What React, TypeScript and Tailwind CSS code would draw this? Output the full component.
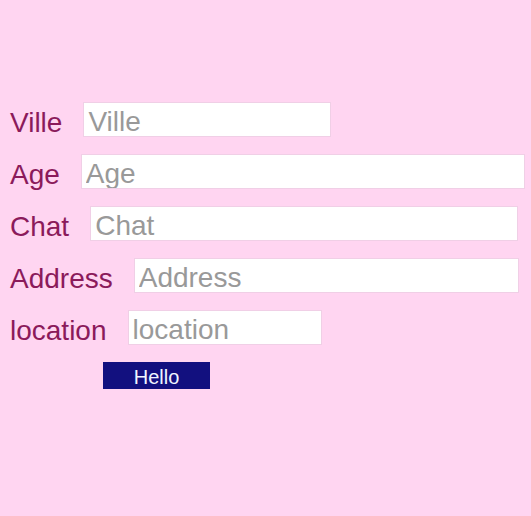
import React from "react";

const fields = [
  { name: "Ville", width: "w-[248px]" },
  { name: "Age", width: "w-[444px]" },
  { name: "Chat", width: "w-[428px]" },
  { name: "Address", width: "w-[385px]" },
  { name: "location", width: "w-[194px]" },
];

export default function App() {
  return (
    <div className="min-h-[516px] w-full bg-[#ffd5f1] pt-[102px] pl-[10px] font-['Liberation_Sans',Arial,sans-serif]">
      <form className="flex flex-col gap-[17px]">
        {fields.map((f) => (
          <div key={f.name} className="flex h-[35px] items-center gap-[21px]">
            <label className="h-[35px] text-[28px] leading-[41px] text-[#8b1a5b]">{f.name}</label>
            <input
              placeholder={f.name}
              className={`${f.width} h-[35px] bg-white border border-[#f0cfe6] px-[4px] pt-[4px] pb-0 text-[28px] leading-[29px] placeholder:text-[#999999] outline-none`}
            />
          </div>
        ))}
        <button
          type="button"
          className="ml-[93px] w-[107px] h-[27px] bg-[#12107f] text-[#f0f6ff] text-[20px] leading-none pt-[3px]"
        >
          Hello
        </button>
      </form>
    </div>
  );
}
